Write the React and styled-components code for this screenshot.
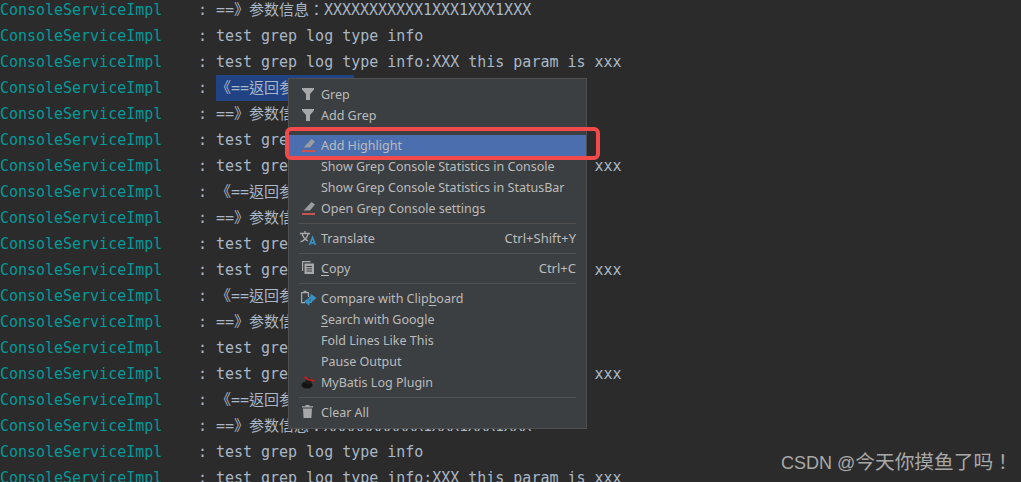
import React from 'react';
import styled, { createGlobalStyle } from 'styled-components';

const Global = createGlobalStyle`
  html, body { margin: 0; padding: 0; background: #2b2b2b; height: 100%; overflow: hidden; }
`;
const Page = styled.div`
  position: relative;
  width: 1021px;
  height: 482px;
  overflow: hidden;
  background: #2b2b2b;
`;
const Log = styled.div`
  margin-top: -3px;
  display: flex;
  flex-direction: column;
  font-family: "DejaVu Sans Mono", "Noto Sans CJK TC", monospace;
  font-size: 15px;
  letter-spacing: -0.02px;
`;
const Row = styled.div`
  display: flex;
  height: 26px;
  line-height: 26px;
  white-space: pre;
  color: #a9b7c6;
`;
const Source = styled.span`
  width: 198px;
  color: #009a9a;
  flex: none;
`;
const Colon = styled.span`
  width: 18px;
  flex: none;
`;
const Message = styled.span`
  background: ${p => (p.$selected ? '#214283' : 'transparent')};
`;
const Menu = styled.div`
  position: absolute;
  left: 288px;
  top: 78px;
  width: 297px;
  padding: 5px 0;
  background: #3c3f41;
  border: 1px solid #515151;
  display: flex;
  flex-direction: column;
  font-family: "Noto Sans", sans-serif;
  font-size: 12.5px;
  color: #bbbbbb;
`;
const Item = styled.div`
  height: 21px;
  display: flex;
  align-items: center;
  padding: 0 10px 0 12px;
  background: ${p => (p.$active ? '#4b6eaf' : 'transparent')};
`;
const IconSlot = styled.span`
  width: 16px;
  height: 16px;
  margin: 2px 4px 0 0;
  align-self: flex-start;
  flex: none;
  display: flex;
  svg { display: block; overflow: visible; }
`;
const Label = styled.span`
  flex: 1;
  margin-top: -1px;
  white-space: pre;
  u { text-underline-offset: 2px; }
`;
const Shortcut = styled.span`
  margin-top: -1px;
  font-size: 13px;
  white-space: pre;
`;
const Separator = styled.div`
  height: 1px;
  margin: 4px 10px;
  background: #515151;
`;
const Callout = styled.div`
  position: absolute;
  left: 285px;
  top: 127px;
  width: 315px;
  height: 33px;
  box-sizing: border-box;
  border: 4px solid #f24a4a;
  border-radius: 6px;
`;
const Watermark = styled.div`
  position: absolute;
  left: 781px;
  top: 449px;
  font-family: "Liberation Sans", "Noto Sans CJK TC", sans-serif;
  font-size: 18px;
  line-height: 26px;
  color: #a8a8a8;
  white-space: pre;
`;
const WatermarkCjk = styled.span`
  font-size: 19.7px;
`;

const Funnel = () => (
  <svg width="16" height="16" viewBox="0 0 16 16"><path d="M1 2h12v1.5L9 8v6H5V8L1 3.5z" fill="#a6a8aa" /></svg>
);
const Marker = () => (
  <svg width="16" height="16" viewBox="0 0 16 16">
    <path d="M10.5 2 14 4.5 9 10.5H2.5L5 8z" fill="#9a9c9e" />
    <rect x="1" y="13" width="13" height="2" fill="#c75450" />
  </svg>
);
const Translate = () => (
  <svg width="16" height="16" viewBox="0 0 16 16" fill="none">
    <path d="M-1 3.5h10M4 1v2.5M7.2 3.5C6.5 7 4 10 -.5 12M1 3.5c.8 3 3.2 6 6 7.5" stroke="#a6a8aa" strokeWidth="1.3" />
    <path d="M8.6 15 11.5 7.5 14.4 15M9.6 12.8h3.8" stroke="#3592c4" strokeWidth="1.7" />
  </svg>
);
const Copy = () => (
  <svg width="16" height="16" viewBox="0 0 16 16" fill="none">
    <path d="M1 1h8.5v1.2H2.2V11H1z" fill="#a6a8aa" />
    <path d="M3.5 3.5H13V14H3.5z" fill="#a6a8aa" />
    <path d="M5.5 6.5H11M5.5 8.8H11M5.5 11H11" stroke="#3c3f41" />
  </svg>
);
const Compare = () => (
  <svg width="16" height="16" viewBox="0 0 16 16" fill="none">
    <path d="M0 2h2.5V.8h3V2H8v5H6.8V3.2H1.2V12H4v1.2H0z" fill="#a6a8aa" />
    <path d="M9.5 3.5 15.5 8 10 12.5V9.5H8V6.5h1.5z" fill="#3592c4" />
    <path d="M8.5 7.5V10.5H11V13H8.5v3L3 11.5z" fill="#3592c4" />
  </svg>
);
const Bird = () => (
  <svg width="16" height="16" viewBox="0 0 16 16">
    <ellipse cx="6" cy="11" rx="5.5" ry="3.5" fill="#141414" />
    <circle cx="7.5" cy="7.5" r="3" fill="#1d1d1d" />
    <path d="M3.5 3 7 5.5 13.5 7" stroke="#d11c1c" strokeWidth="1.6" fill="none" />
  </svg>
);
const Trash = () => (
  <svg width="16" height="16" viewBox="0 0 16 16">
    <path d="M4.5 1h4v1.2H12v1.3H1V2.2h3.5z" fill="#a6a8aa" />
    <path d="M2 4.5h9L10.4 14H2.6z" fill="#a6a8aa" />
  </svg>
);

const messages = [
  '==》参数信息：XXXXXXXXXXX1XXX1XXX1XXX',
  'test grep log type info',
  'test grep log type info:XXX this param is xxx',
  '《==返回参数信息：',
];

const menu = [
  [
    { icon: <Funnel />, label: 'Grep' },
    { icon: <Funnel />, label: 'Add Grep' },
  ],
  [
    { icon: <Marker />, label: 'Add Highlight', active: true },
    { label: 'Show Grep Console Statistics in Console' },
    { label: 'Show Grep Console Statistics in StatusBar' },
    { icon: <Marker />, label: 'Open Grep Console settings' },
  ],
  [{ icon: <Translate />, label: 'Translate', shortcut: 'Ctrl+Shift+Y' }],
  [{ icon: <Copy />, label: <><u>C</u>opy</>, shortcut: 'Ctrl+C' }],
  [
    { icon: <Compare />, label: <>Compare with Clip<u>b</u>oard</> },
    { label: <><u>S</u>earch with Google</> },
    { label: 'Fold Lines Like This' },
    { label: 'Pause Output' },
    { icon: <Bird />, label: 'MyBatis Log Plugin' },
  ],
  [{ icon: <Trash />, label: 'Clear All' }],
];

export default function App() {
  return (
    <Page>
      <Global />
      <Log>
        {Array.from({ length: 19 }, (_, i) => (
          <Row key={i}>
            <Source>ConsoleServiceImpl</Source>
            <Colon>:</Colon>
            <Message $selected={i === 3}>{messages[i % 4]}</Message>
          </Row>
        ))}
      </Log>
      <Menu>
        {menu.map((group, g) => (
          <React.Fragment key={g}>
            {g > 0 && <Separator />}
            {group.map((it, j) => (
              <Item key={j} $active={it.active}>
                <IconSlot>{it.icon}</IconSlot>
                <Label>{it.label}</Label>
                {it.shortcut && <Shortcut>{it.shortcut}</Shortcut>}
              </Item>
            ))}
          </React.Fragment>
        ))}
      </Menu>
      <Callout />
      <Watermark>CSDN @<WatermarkCjk>今天你摸鱼了吗！</WatermarkCjk></Watermark>
    </Page>
  );
}
